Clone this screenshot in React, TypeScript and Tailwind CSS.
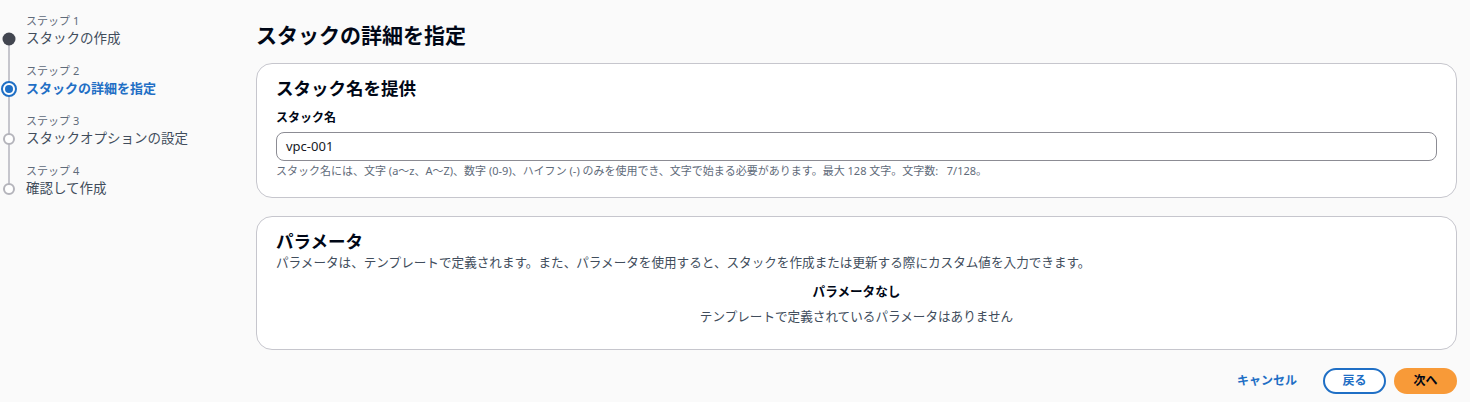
import React from "react";

const font = { fontFamily: '"Noto Sans", "Noto Sans CJK JP", sans-serif' };

function Step({ n, title, state, last }: { n: number; title: string; state: "done" | "active" | "todo"; last?: boolean }) {
  return (
    <div className="flex h-[50px]">
      <div className="relative w-[26px] shrink-0">
        {!last && <div className="absolute left-[8px] top-[26px] w-[2px] h-[50px] bg-[#c6c6cd]" />}
        <div className="absolute left-[9px] top-[26px] -translate-x-1/2 -translate-y-1/2">
          {state === "done" && <div className="w-[13px] h-[13px] rounded-full bg-[#424650]" />}
          {state === "active" && (
            <div className="w-[16px] h-[16px] rounded-full border-2 border-[#1f6fc5] bg-white flex items-center justify-center">
              <div className="w-[8px] h-[8px] rounded-full bg-[#1f6fc5]" />
            </div>
          )}
          {state === "todo" && <div className="w-[12px] h-[12px] rounded-full border-2 border-[#b4b4bb] bg-white" />}
        </div>
      </div>
      <div className="flex flex-col pt-[1px]">
        <div className="text-[11px] leading-[14px] text-[#5f6b7a]">ステップ {n}</div>
        <div
          className={
            state === "active"
              ? "text-[13px] leading-[20px] font-bold text-[#1f6fc5]"
              : "text-[13.5px] leading-[20px] text-[#414d5c]"
          }
        >
          {title}
        </div>
      </div>
    </div>
  );
}

export default function App() {
  return (
    <div className="w-[1470px] h-[402px] bg-[#fafafa] text-[#16191f] overflow-hidden flex" style={font}>
      <div className="w-[256px] shrink-0 pt-[13px] pl-[0px]">
        <Step n={1} title="スタックの作成" state="done" />
        <Step n={2} title="スタックの詳細を指定" state="active" />
        <Step n={3} title="スタックオプションの設定" state="todo" />
        <Step n={4} title="確認して作成" state="todo" last />
      </div>
      <div className="w-[1201px] shrink-0 flex flex-col">
        <h1 className="text-[21px] leading-[28px] font-bold mt-[21px] mb-[14px] text-[#000716]">スタックの詳細を指定</h1>
        <div className="bg-white border border-[#c6c6cd] rounded-[16px] px-[19px] pt-[11px] h-[135px]">
          <h2 className="text-[17.5px] leading-[26px] font-bold text-[#000716]">スタック名を提供</h2>
          <div className="text-[12px] leading-[16px] font-bold mt-[9px] text-[#000716]">スタック名</div>
          <div className="mt-[6px] h-[29px] border border-[#8c8c94] rounded-[8px] px-[9px] flex items-center text-[13px]">vpc-001</div>
          <div className="text-[11px] leading-[14px] mt-[3px] text-[#5f6b7a]">
            スタック名には、文字 (a～z、A～Z)、数字 (0-9)、ハイフン (-) のみを使用でき、文字で始まる必要があります。最大 128 文字。文字数:&nbsp;&nbsp;&nbsp;7/128。
          </div>
        </div>
        <div className="bg-white border border-[#c6c6cd] rounded-[16px] px-[19px] pt-[11px] h-[134px] mt-[18px]">
          <h2 className="text-[17.5px] leading-[26px] font-bold text-[#000716]">パラメータ</h2>
          <div className="text-[12.6px] leading-[18px] text-[#414d5c]">
            パラメータは、テンプレートで定義されます。また、パラメータを使用すると、スタックを作成または更新する際にカスタム値を入力できます。
          </div>
          <div className="text-center text-[12.6px] leading-[18px] font-bold mt-[11px] text-[#000716]">パラメータなし</div>
          <div className="text-center text-[12.6px] leading-[18px] mt-[7px] text-[#414d5c]">テンプレートで定義されているパラメータはありません</div>
        </div>
        <div className="flex justify-end items-center mt-[18px] gap-[8px]">
          <button className="text-[12px] font-bold text-[#1f6fc5] px-[18px] h-[26px]">キャンセル</button>
          <button className="text-[12px] font-bold text-[#1f6fc5] w-[63px] h-[26px] rounded-full border-2 border-[#1f6fc5] bg-white">戻る</button>
          <button className="text-[12px] font-bold text-[#000716] w-[63px] h-[26px] rounded-full bg-[#f89a38]">次へ</button>
        </div>
      </div>
    </div>
  );
}
